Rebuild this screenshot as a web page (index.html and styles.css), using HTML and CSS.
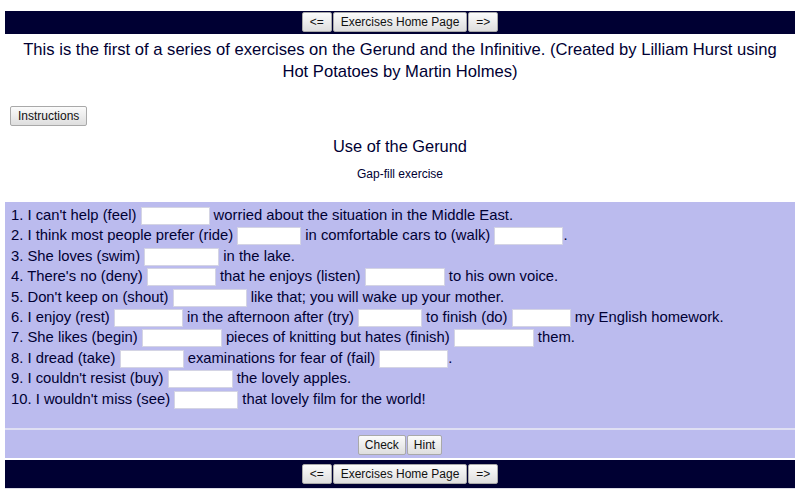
FILE: index.html
```html
<!DOCTYPE html>
<html lang="en">
<head>
<meta charset="utf-8">
<title>Use of the Gerund</title>
<link rel="stylesheet" href="styles.css">
</head>
<body>
<div class="page">
  <div class="navbar top">
    <button class="btn nav">&lt;=</button>
    <button class="btn nav">Exercises Home Page</button>
    <button class="btn nav">=&gt;</button>
  </div>

  <p class="intro">This is the first of a series of exercises on the Gerund and the Infinitive. (Created by Lilliam Hurst using Hot Potatoes by Martin Holmes)</p>

  <div class="instr-row"><button class="btn instr">Instructions</button></div>

  <h2 class="heading">Use of the Gerund</h2>
  <h3 class="subheading">Gap-fill exercise</h3>

  <div class="exercise">
    <div class="line">1. I can't help (feel) <input class="gap" style="width:69px"> worried about the situation in the Middle East.</div>
    <div class="line">2. I think most people prefer (ride) <input class="gap" style="width:64px"> in comfortable cars to (walk) <input class="gap" style="width:69px">.</div>
    <div class="line">3. She loves (swim) <input class="gap" style="width:75px"> in the lake.</div>
    <div class="line">4. There's no (deny) <input class="gap" style="width:69px"> that he enjoys (listen) <input class="gap" style="width:80px"> to his own voice.</div>
    <div class="line">5. Don't keep on (shout) <input class="gap" style="width:74px"> like that; you will wake up your mother.</div>
    <div class="line">6. I enjoy (rest) <input class="gap" style="width:69px"> in the afternoon after (try) <input class="gap" style="width:64px"> to finish (do) <input class="gap" style="width:59px"> my English homework.</div>
    <div class="line">7. She likes (begin) <input class="gap" style="width:80px"> pieces of knitting but hates (finish) <input class="gap" style="width:80px"> them.</div>
    <div class="line">8. I dread (take) <input class="gap" style="width:64px"> examinations for fear of (fail) <input class="gap" style="width:69px">.</div>
    <div class="line">9. I couldn't resist (buy) <input class="gap" style="width:65px"> the lovely apples.</div>
    <div class="line">10. I wouldn't miss (see) <input class="gap" style="width:64px"> that lovely film for the world!</div>
  </div>

  <div class="actions">
    <button class="btn">Check</button>
    <button class="btn">Hint</button>
  </div>

  <div class="navbar bottom">
    <button class="btn nav">&lt;=</button>
    <button class="btn nav">Exercises Home Page</button>
    <button class="btn nav">=&gt;</button>
  </div>
</div>
</body>
</html>
```

FILE: styles.css
```css
html, body {
  margin: 0;
  padding: 0;
  background: #ffffff;
}

body {
  font-family: "Liberation Sans", Arial, sans-serif;
  color: #000033;
}

.page {
  margin: 0 5px;
  padding-top: 11px;
}

.btn {
  font-family: "Liberation Sans", Arial, sans-serif;
  font-size: 12px;
  color: #111111;
  height: 20px;
  padding: 0 6px;
  margin: 0;
  border: 1px solid #a9a9a9;
  border-radius: 2px;
  background: linear-gradient(#fbfbfb, #dedede);
  box-sizing: border-box;
  line-height: 18px;
}

.btn.nav {
  padding: 0 7px;
}

.navbar {
  background: #000033;
  display: flex;
  justify-content: center;
  gap: 1px;
}

.navbar.top {
  padding: 1px 0 2px;
}

.navbar.bottom {
  margin-top: 2px;
  padding: 4px 0 4px;
  border-bottom: 1px solid #dcdce8;
}

.intro {
  margin: 5px 0 0;
  padding: 0 12px;
  text-align: center;
  font-size: 16.6px;
  line-height: 22px;
}

.instr-row {
  margin-top: 23px;
  padding-left: 5px;
  display: flex;
}

.btn.instr {
  padding: 0 7px;
}

.heading {
  margin: 9px 0 0;
  text-align: center;
  font-size: 16.4px;
  line-height: 22px;
  font-weight: normal;
}

.subheading {
  margin: 9px 0 0;
  text-align: center;
  font-size: 12px;
  line-height: 16px;
  font-weight: normal;
}

.exercise {
  margin-top: 20px;
  background: #bbbbee;
  padding: 3px 6px 19px;
  font-size: 14.8px;
  border-bottom: 2px solid #dfdff3;
}

.line {
  line-height: 20.4px;
  height: 20.4px;
  white-space: nowrap;
}

.gap {
  box-sizing: border-box;
  height: 18px;
  margin: 0;
  padding: 0 2px;
  border: 1px solid #d4d4e4;
  background: #ffffff;
  vertical-align: middle;
  font-size: 13px;
}

.actions {
  background: #bbbbee;
  display: flex;
  justify-content: center;
  gap: 1px;
  padding: 5px 0 3px;
}
```
